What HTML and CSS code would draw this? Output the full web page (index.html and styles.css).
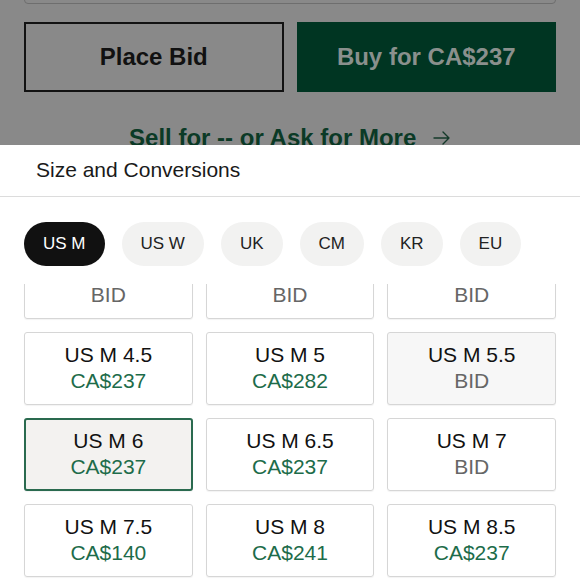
FILE: index.html
```html
<!DOCTYPE html>
<html lang="en">
<head>
    <meta charset="UTF-8">
    <meta name="viewport" content="width=device-width, initial-scale=1.0">
    <title>Size and Conversions</title>
    <link rel="stylesheet" href="styles.css">
</head>
<body>
    <div class="backdrop">
        <div class="field"></div>
        <div class="actions">
            <div class="btn btn-outline">Place Bid</div>
            <div class="btn btn-buy">Buy for CA$237</div>
        </div>
        <div class="sell">
            Sell for -- or Ask for More
            <svg class="arrow" width="18" height="14" viewBox="0 0 18 14" fill="none" stroke="currentColor" stroke-width="1.4" stroke-linecap="round" stroke-linejoin="round">
                <path d="M1 7h15M10 1l6 6-6 6"/>
            </svg>
        </div>
    </div>

    <div class="sheet">
        <div class="sheet-title">Size and Conversions</div>
        <div class="units">
            <div class="unit active">US M</div>
            <div class="unit">US W</div>
            <div class="unit">UK</div>
            <div class="unit">CM</div>
            <div class="unit">KR</div>
            <div class="unit">EU</div>
        </div>
        <div class="grid-wrap">
            <div class="grid">
                <div class="cell"><div class="size">US M 3</div><div class="bid">BID</div></div>
                <div class="cell"><div class="size">US M 3.5</div><div class="bid">BID</div></div>
                <div class="cell"><div class="size">US M 4</div><div class="bid">BID</div></div>

                <div class="cell"><div class="size">US M 4.5</div><div class="price">CA$237</div></div>
                <div class="cell"><div class="size">US M 5</div><div class="price">CA$282</div></div>
                <div class="cell unavailable"><div class="size">US M 5.5</div><div class="bid">BID</div></div>

                <div class="cell selected"><div class="size">US M 6</div><div class="price">CA$237</div></div>
                <div class="cell"><div class="size">US M 6.5</div><div class="price">CA$237</div></div>
                <div class="cell"><div class="size">US M 7</div><div class="bid">BID</div></div>

                <div class="cell"><div class="size">US M 7.5</div><div class="price">CA$140</div></div>
                <div class="cell"><div class="size">US M 8</div><div class="price">CA$241</div></div>
                <div class="cell"><div class="size">US M 8.5</div><div class="price">CA$237</div></div>

                <div class="cell"><div class="size">US M 9</div><div class="price">CA$237</div></div>
                <div class="cell"><div class="size">US M 9.5</div><div class="price">CA$237</div></div>
                <div class="cell"><div class="size">US M 10</div><div class="price">CA$237</div></div>
            </div>
        </div>
    </div>
</body>
</html>
```

FILE: styles.css
```css
body {
    margin: 0;
    width: 580px;
    height: 580px;
    overflow: hidden;
    font-family: "Liberation Sans", Arial, sans-serif;
    background-color: #ffffff;
}

.backdrop {
    height: 145px;
    overflow: hidden;
    padding: 0 24px;
    box-sizing: border-box;
    background-color: #898989;
}

.field {
    height: 20px;
    margin-top: -18px;
    border: 1px solid #6e6e6e;
    border-radius: 4px;
}

.actions {
    display: grid;
    grid-template-columns: 1fr 1fr;
    gap: 13px;
    margin-top: 18px;
}

.btn {
    height: 70px;
    display: flex;
    align-items: center;
    justify-content: center;
    font-size: 24px;
    font-weight: bold;
    box-sizing: border-box;
}

.btn-outline {
    border: 2px solid #121212;
    color: #111111;
}

.btn-buy {
    background-color: #003522;
    color: #8a908d;
}

.sell {
    margin-top: 32px;
    text-align: center;
    font-size: 24px;
    font-weight: bold;
    line-height: 28px;
    color: #0b3a26;
}

.arrow {
    margin-left: 10px;
    vertical-align: 1px;
    color: #143a2a;
}

.sheet {
    background-color: #ffffff;
}

.sheet-title {
    height: 51px;
    line-height: 50px;
    padding: 0 36px;
    font-size: 21px;
    color: #1a1a1a;
    border-bottom: 1px solid #dcdcdc;
}

.units {
    display: flex;
    gap: 17px;
    padding: 25px 24px 0;
}

.unit {
    height: 44px;
    line-height: 44px;
    padding: 0 19px;
    border-radius: 22px;
    font-size: 17px;
    color: #222222;
    background-color: #f2f2f1;
}

.unit.active {
    background-color: #111111;
    color: #ffffff;
}

.grid-wrap {
    margin-top: 18px;
    height: 296px;
    overflow: hidden;
}

.grid {
    display: grid;
    grid-template-columns: repeat(3, 1fr);
    gap: 13px;
    margin-top: -38px;
    padding: 0 24px;
}

.cell {
    padding: 9px 0 10px;
    border: 1px solid #d6d6d6;
    border-radius: 3px;
    text-align: center;
    font-size: 21px;
    line-height: 26px;
    box-shadow: 0 1px 1px rgba(0, 0, 0, 0.05);
}

.size {
    color: #111111;
}

.price {
    color: #1d6c4a;
}

.bid {
    color: #666666;
}

.cell.unavailable {
    background-color: #f7f7f7;
}

.cell.selected {
    padding: 8px 0 9px;
    border: 2px solid #2a6a4f;
    background-color: #f3f2f0;
}
```
